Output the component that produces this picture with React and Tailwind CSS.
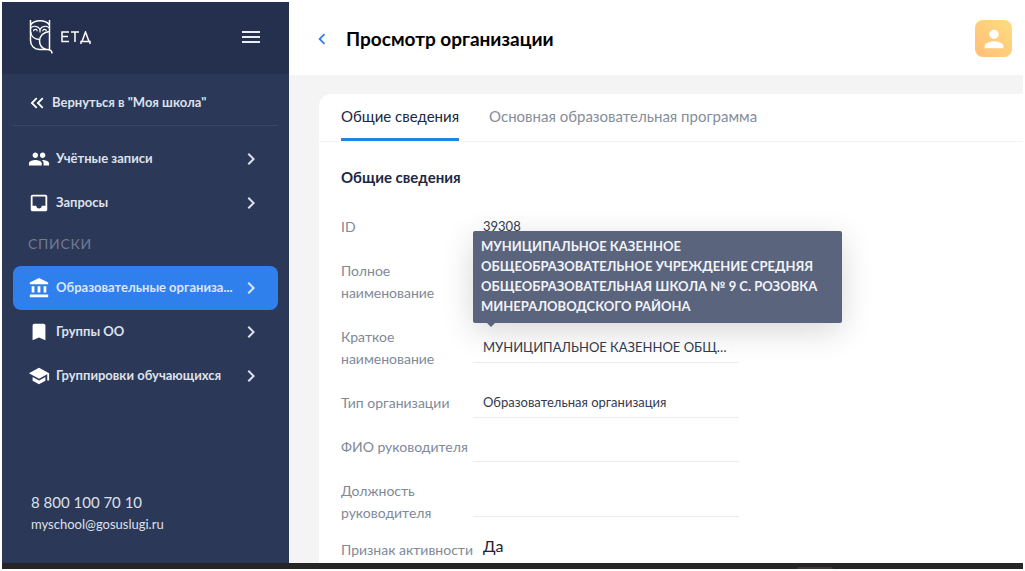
import {
  MdAccountBalance,
  MdBookmark,
  MdChevronLeft,
  MdChevronRight,
  MdInbox,
  MdKeyboardDoubleArrowLeft,
  MdMenu,
  MdPeople,
  MdPerson,
  MdSchool,
} from "react-icons/md";

const FULL_NAME =
  "МУНИЦИПАЛЬНОЕ КАЗЕННОЕ ОБЩЕОБРАЗОВАТЕЛЬНОЕ УЧРЕЖДЕНИЕ СРЕДНЯЯ ОБЩЕОБРАЗОВАТЕЛЬНАЯ ШКОЛА № 9 С. РОЗОВКА МИНЕРАЛОВОДСКОГО РАЙОНА";

const mainLinks = [
  { label: "Учётные записи", icon: MdPeople },
  { label: "Запросы", icon: MdInbox },
];

const listLinks = [
  { label: "Образовательные организа...", icon: MdAccountBalance, active: true },
  { label: "Группы ОО", icon: MdBookmark },
  { label: "Группировки обучающихся", icon: MdSchool },
];

function Logo() {
  return (
    <a href="#" className="flex items-center gap-2 text-white" aria-label="ЕТД">
      <svg width="24" height="34" viewBox="0 0 24 34" fill="none" stroke="currentColor" strokeWidth="1.5">
        <path d="M1.500 0v20.500c0 5.500 4 9 9 9h7.500c3 0 5 1.200 5 4" />
        <path d="M20.500 0v29.500" />
        <path d="M1.500 5C3.500 2 7 .800 11 .800s7.500 1.200 9.500 4.200" />
        <path d="M1.500 8c2.500-2.600 7.500-2.400 9.500 1.400 2-3.800 7-4 9.500-1.400" strokeWidth="1.200" />
        <path d="M4.500 11.200c.2-2.400 3.600-2.400 3.800 0M13.700 11.200c.2-2.400 3.600-2.400 3.800 0" strokeWidth="1.200" />
        <path d="M11 9.400v3" strokeWidth="1.200" />
        <path d="M1.500 11.500c.5 4.500 4 7.800 9 8" />
        <path d="M20.500 11.500c-6 .5-10 4.500-10 9.500 0 4 2.500 7 6.500 8.500" />
      </svg>
      <svg width="30" height="13" viewBox="0 0 30 13" fill="none" stroke="currentColor" strokeWidth="1.5" aria-hidden="true">
        <path d="M8 1H1v9.500h7M1 5.500h6" />
        <path d="M10 1h8M14 1v10" />
        <path d="M20 13v-2.500h9V13M21 10.500 24.500 1 28 10.500" />
      </svg>
    </a>
  );
}

function NavItem({ label, icon: Icon, active }) {
  return (
    <a
      href="#"
      className={`flex h-11 items-center gap-1.5 rounded-lg px-[15px] text-[13px] font-bold ${
        active ? "bg-[#2f80ed] text-[#dbe6fa]" : "text-[#dde1ea]"
      }`}
    >
      <Icon size={22} className="shrink-0 text-white" />
      <span className="min-w-0 flex-1 truncate">{label}</span>
      <MdChevronRight size={24} className="shrink-0" />
    </a>
  );
}

function Sidebar() {
  return (
    <aside className="flex w-[287px] shrink-0 flex-col bg-[#2c3858]">
      <div className="flex h-[72px] shrink-0 items-center justify-between bg-[#25304e] pr-[26px] pb-0.5 pl-[27px]">
        <Logo />
        <button type="button" aria-label="Меню" className="text-[#e9ecf3]">
          <MdMenu size={24} />
        </button>
      </div>

      <div className="px-[11px]">
        <a
          href="#"
          className="flex h-[52px] items-center gap-1 border-b border-[#3b4767] px-[13px] pt-1.5 text-[13px] font-bold text-[#dde1ea]"
        >
          <MdKeyboardDoubleArrowLeft size={22} className="text-white" />
          Вернуться в "Моя школа"
        </a>
        <nav className="pt-[11px]">
          {mainLinks.map((item) => (
            <NavItem key={item.label} {...item} />
          ))}
          <h2 className="flex h-[41px] items-center px-[15px] pb-1 text-sm tracking-wider text-[#717b94]">
            СПИСКИ
          </h2>
          {listLinks.map((item) => (
            <NavItem key={item.label} {...item} />
          ))}
        </nav>
      </div>

      <div className="mt-auto flex flex-col px-[29px] pb-[29px] text-[#dde1ea]">
        <a href="tel:88001007010" className="text-[15px] leading-6">
          8 800 100 70 10
        </a>
        <a href="mailto:myschool@gosuslugi.ru" className="text-[13px] leading-5">
          myschool@gosuslugi.ru
        </a>
      </div>
    </aside>
  );
}

function Tooltip({ children }) {
  return (
    <div
      role="tooltip"
      className="absolute bottom-full left-0 z-10 mb-[11px] w-[369px] rounded-xs bg-[#5a647d] px-2 pt-[5px] pb-[7px] text-[13px] leading-5 font-bold text-[#f1f3f7] shadow-[0_8px_32px_rgba(0,0,0,0.16)]"
    >
      {children}
      <span className="absolute top-full left-3.5 border-x-4 border-t-4 border-x-transparent border-t-[#5a647d]" />
    </div>
  );
}

function Field({ id, label, value = "", plain, tooltip }) {
  return (
    <div className="flex items-center">
      <label htmlFor={id} className="w-[132px] shrink-0 py-[11px] text-sm leading-[22px] text-[#808998]">
        {label}
      </label>
      <div className="relative w-[266px]">
        {tooltip && <Tooltip>{tooltip}</Tooltip>}
        <input
          id={id}
          readOnly
          value={value}
          className={`block h-[29px] w-full border-b px-2.5 pb-0.5 text-[13px] text-ellipsis text-[#323b4f] outline-none ${
            plain ? "border-transparent" : "border-[#ebecee]"
          }`}
        />
      </div>
    </div>
  );
}

export default function App() {
  return (
    <div className="flex h-screen flex-col overflow-hidden bg-white p-0.5 font-[Lato,sans-serif]">
      <div className="flex min-h-0 flex-1">
        <Sidebar />

        <main className="flex min-w-0 flex-1 flex-col bg-[#f4f4f4]">
          <header className="flex h-[73px] shrink-0 items-center bg-white pr-[11px] pl-[22px]">
            <button type="button" aria-label="Назад" className="text-[#2f80ed]">
              <MdChevronLeft size={22} />
            </button>
            <h1 className="ml-[13px] text-[19px] leading-6 font-bold text-black">Просмотр организации</h1>
            <button
              type="button"
              aria-label="Профиль"
              className="ml-auto flex size-[37px] items-center justify-center rounded-lg bg-linear-to-tr from-[#ffbf78] to-[#ffdc80] text-white"
            >
              <MdPerson size={28} />
            </button>
          </header>

          <section className="mt-[19px] ml-[30px] min-h-0 flex-1 overflow-hidden rounded-tl-xl bg-white">
            <div role="tablist" className="flex h-12 gap-[30px] border-b border-[#f2f4f3] px-[22px] text-[15px]">
              <button
                type="button"
                role="tab"
                aria-selected="true"
                className="border-b-3 border-[#2383e2] text-[#1d2742]"
              >
                Общие сведения
              </button>
              <button
                type="button"
                role="tab"
                aria-selected="false"
                className="border-b-3 border-transparent text-[#868d9a]"
              >
                Основная образовательная программа
              </button>
            </div>

            <div className="px-[22px] pt-6">
              <h2 className="mb-[17px] text-[15px] leading-[22px] font-bold text-[#1d2742]">Общие сведения</h2>
              <Field id="org-id" label="ID" value="39308" plain />
              <Field id="full-name" label="Полное наименование" value={FULL_NAME} />
              <Field id="short-name" label="Краткое наименование" value={FULL_NAME} tooltip={FULL_NAME} />
              <Field id="org-type" label="Тип организации" value="Образовательная организация" />
              <Field id="head-name" label="ФИО руководителя" />
              <Field id="head-post" label="Должность руководителя" />
              <div className="flex">
                <span className="w-[132px] shrink-0 py-1 text-sm leading-[22px] text-[#808998]">
                  Признак активности
                </span>
                <span className="px-2.5 text-base leading-[22px] text-[#1f2430]">Да</span>
              </div>
            </div>
          </section>
        </main>
      </div>

      {/* Taskbar strip */}
      <div className="flex h-1.5 shrink-0 justify-end bg-[#262626] pr-[190px]">
        <span className="mt-1 w-9 rounded-t-xs bg-[#3f3a36]" />
      </div>
    </div>
  );
}
